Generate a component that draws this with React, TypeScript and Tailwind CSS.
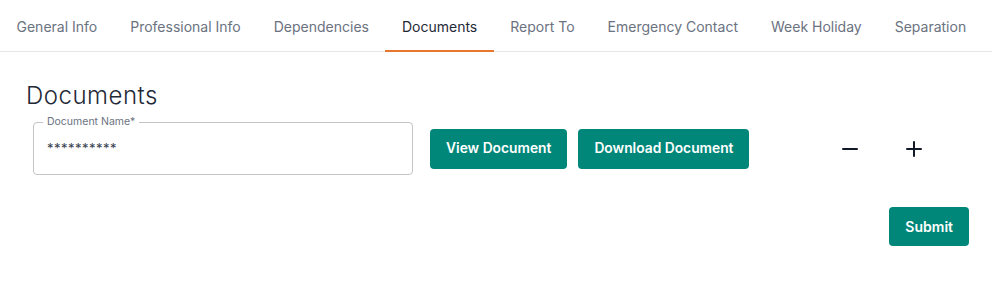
import { Minus, Plus } from "lucide-react";

const tabs = [
  "General Info",
  "Professional Info",
  "Dependencies",
  "Documents",
  "Report To",
  "Emergency Contact",
  "Week Holiday",
  "Separation",
];

export default function App() {
  return (
    <div className="w-[997px] h-[303px] bg-white font-['Inter',sans-serif]">
      {/* Tabs */}
      <div className="flex w-[992px] border-b border-[#e5e7eb]">
        {tabs.map((t) => (
          <div
            key={t}
            className={
              t === "Documents"
                ? "px-[16.5px] pt-[18px] pb-[14px] text-[14px] leading-[18px] text-[#1f2937] border-b-2 border-[#e8772e] -mb-px"
                : "px-[16.5px] pt-[18px] pb-[14px] text-[14px] leading-[18px] text-[#6b7280]"
            }
          >
            {t}
          </div>
        ))}
      </div>

      <div className="pl-[26px] pr-[28px]">
        <h2 className="mt-[29px] text-[24px] leading-[30px] font-light text-[#1f2937] tracking-[0.5px]">
          Documents
        </h2>

        <div className="flex items-center mt-[11px] pl-[7px]">
          {/* Outlined input */}
          <div className="relative w-[380px] h-[53px] border border-[#c4c4c4] rounded-[4px]">
            <span className="absolute -top-[8px] left-[9px] px-[4px] bg-white text-[10.5px] leading-[14px] text-[#6b7280]">
              Document Name*
            </span>
            <div className="pl-[13px] pt-[17px] text-[13px] leading-[16px] text-[#374151] tracking-[0.5px]">
              **********
            </div>
          </div>

          <button className="ml-[17px] h-[40px] px-[16px] rounded-[4px] bg-[#00877a] text-white text-[13.8px] font-semibold">
            View Document
          </button>
          <button className="ml-[11px] h-[40px] px-[16px] rounded-[4px] bg-[#00877a] text-white text-[13.8px] font-semibold">
            Download Document
          </button>

          <button className="ml-[81px] w-[40px] h-[40px] flex items-center justify-center text-[#111827]">
            <Minus size={24} strokeWidth={2} />
          </button>
          <button className="ml-[24px] w-[40px] h-[40px] flex items-center justify-center text-[#111827]">
            <Plus size={24} strokeWidth={2} />
          </button>
        </div>

        <div className="flex justify-end mt-[32px]">
          <button className="h-[39px] px-[16px] rounded-[4px] bg-[#00877a] text-white text-[14px] font-semibold">
            Submit
          </button>
        </div>
      </div>
    </div>
  );
}
